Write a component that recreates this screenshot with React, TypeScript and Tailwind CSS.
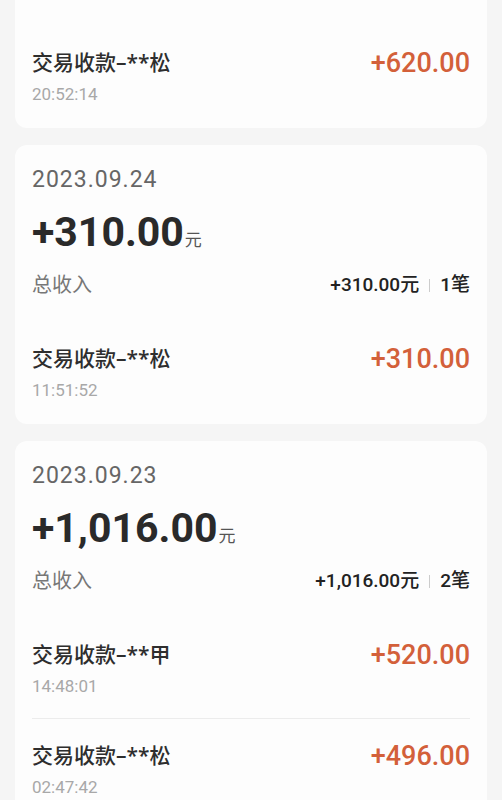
const num = { fontFamily: 'Roboto, "Noto Sans CJK SC", sans-serif' };
const cjk = { fontFamily: '"Noto Sans", "Noto Sans CJK SC", sans-serif' };

type Tx = { name: string; time: string; amount: string };

const Row = ({ tx, first }: { tx: Tx; first?: boolean }) => (
  <div className={`flex items-start justify-between py-[22px] ${first ? '' : 'border-t border-[#ececec]'}`}>
    <div>
      <div className="text-[21px] leading-[28px] font-medium text-[#2e2e2e]" style={cjk}>
        {tx.name}
      </div>
      <div className="mt-[8px] text-[17px] leading-[20px] text-[#a8a8a8]" style={num}>
        {tx.time}
      </div>
    </div>
    <div className="text-[27px] leading-[28px] font-medium text-[#d3603a] pt-[1px]" style={num}>
      {tx.amount}
    </div>
  </div>
);

type Day = { date: string; total: string; count: string; items: Tx[] };

const DayCard = ({ day }: { day: Day }) => (
  <div className="rounded-xl bg-[#fdfdfd] px-[17px] pt-[21px] pb-[2px]">
    <div className="text-[23px] leading-[28px] tracking-[1px] text-[#666666]" style={num}>
      {day.date}
    </div>
    <div className="mt-[15px] flex items-baseline h-[46px] leading-[46px]">
      <span className="text-[41px] leading-[46px] font-bold text-[#2a2a2a]" style={num}>
        {day.total}
      </span>
      <span className="ml-[1px] text-[17px] leading-[20px] text-[#555555]" style={cjk}>
        元
      </span>
    </div>
    <div className="mt-[17px] pb-[24px] flex items-center justify-between h-[50px] leading-[26px]">
      <span className="text-[20px] text-[#777777]" style={cjk}>
        总收入
      </span>
      <div className="flex items-center text-[19px] font-medium text-[#222222]" style={num}>
        <span>{day.total}元</span>
        <span className="mx-[10px] h-[13px] w-px bg-[#cccccc]" />
        <span>{day.count}笔</span>
      </div>
    </div>
    {day.items.map((tx, i) => (
      <Row key={tx.time} tx={tx} first={i === 0} />
    ))}
  </div>
);

const days: Day[] = [
  {
    date: '2023.09.24',
    total: '+310.00',
    count: '1',
    items: [{ name: '交易收款–**松', time: '11:51:52', amount: '+310.00' }],
  },
  {
    date: '2023.09.23',
    total: '+1,016.00',
    count: '2',
    items: [
      { name: '交易收款–**甲', time: '14:48:01', amount: '+520.00' },
      { name: '交易收款–**松', time: '02:47:42', amount: '+496.00' },
    ],
  },
];

export default function App() {
  return (
    <div className="h-[800px] overflow-hidden bg-[#f5f5f5] px-[15px] flex flex-col gap-[17px]">
      <div className="rounded-b-xl bg-[#fdfdfd] px-[17px] pt-[26px] pb-[2px] shrink-0">
        <Row tx={{ name: '交易收款–**松', time: '20:52:14', amount: '+620.00' }} first />
      </div>
      {days.map((d) => (
        <div key={d.date} className="shrink-0">
          <DayCard day={d} />
        </div>
      ))}
    </div>
  );
}
